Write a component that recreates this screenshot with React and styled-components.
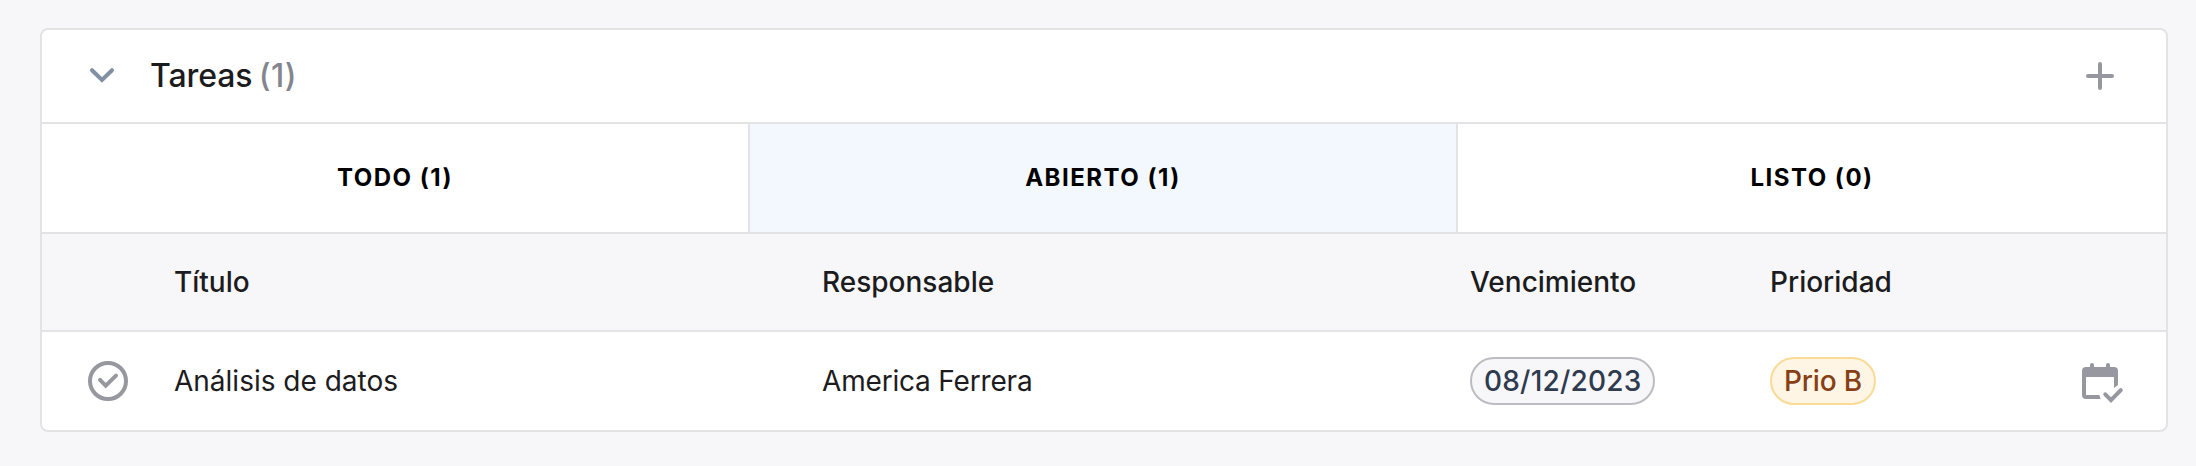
import styled, { createGlobalStyle } from "styled-components"

const GlobalStyle = createGlobalStyle`
  * {
    box-sizing: border-box;
  }

  body {
    margin: 0;
    background: #f7f7f9;
    color: #1c1c20;
    font-family: Inter, "Liberation Sans", sans-serif;
    -webkit-font-smoothing: antialiased;
  }
`

const Page = styled.main`
  min-height: 466px;
  padding: 28px 28px 34px 40px;
`

const Card = styled.section`
  border: 2px solid #e3e3e5;
  border-radius: 8px;
  background: #ffffff;
  overflow: hidden;
`

const CardHeader = styled.header`
  height: 94px;
  padding: 0 46px 0 44px;
  border-bottom: 2px solid #e3e3e5;
  display: flex;
  align-items: center;
`

const IconButton = styled.button`
  padding: 0;
  border: none;
  background: none;
  color: ${(props) => props.$color || "#97979f"};
  display: flex;
  cursor: pointer;
`

const Title = styled.h2`
  margin: 0 auto 0 32px;
  font-size: 32px;
  line-height: 40px;
  font-weight: 500;
  letter-spacing: -0.1px;
`

const Count = styled.span`
  margin-left: -2px;
  color: #85858e;
  letter-spacing: 0.3px;
`

const Tabs = styled.nav`
  height: 110px;
  border-bottom: 2px solid #e3e3e5;
  display: grid;
  grid-template-columns: repeat(3, 1fr);
`

const Tab = styled.button`
  padding: 0 0 2px;
  border: none;
  border-right: 2px solid #e3e3e5;
  background: ${(props) => (props.$active ? "#f3f7fe" : "#ffffff")};
  color: #000000;
  font-family: inherit;
  font-size: 24px;
  font-weight: 700;
  letter-spacing: 1.5px;
  text-transform: uppercase;
  cursor: pointer;

  &:last-child {
    border-right: none;
  }
`

const Row = styled.div`
  height: 98px;
  padding: 0 42px 0 46px;
  display: grid;
  grid-template-columns: 86px 648px 648px 300px 1fr 42px;
  align-items: center;
  font-size: 28px;
  line-height: 36px;
`

const HeadRow = styled(Row)`
  background: #f7f7f9;
  border-bottom: 2px solid #e3e3e5;
  font-weight: 500;
`

const Owner = styled.span`
  letter-spacing: -0.18px;
`

const Chip = styled.span`
  height: 48px;
  padding: 0 12px;
  border: 2px solid ${(props) => (props.$warning ? "#f9db95" : "#bcbcc2")};
  border-radius: 24px;
  background: ${(props) => (props.$warning ? "#fef5e5" : "#f7f7fa")};
  color: ${(props) => (props.$warning ? "#873f15" : "#2f3b4e")};
  font-weight: 500;
  letter-spacing: ${(props) => (props.$warning ? "-0.15px" : "0.2px")};
  display: inline-flex;
  align-items: center;
  vertical-align: middle;
`

const ChevronIcon = () => (
  <svg width="32" height="32" viewBox="0 0 32 32" fill="none" stroke="currentColor" strokeWidth="4" strokeLinecap="round">
    <path d="M6 10.2l10 9.8 10-9.8" />
  </svg>
)

const PlusIcon = () => (
  <svg width="40" height="40" viewBox="0 0 40 40" fill="none" stroke="currentColor" strokeWidth="4" strokeLinecap="round">
    <path d="M20 8v24M8 20h24" />
  </svg>
)

const CheckCircleIcon = () => (
  <svg width="40" height="40" viewBox="0 0 40 40" fill="none" stroke="currentColor" strokeWidth="4" strokeLinecap="round">
    <circle cx="20" cy="20" r="18" />
    <path d="M12 18.9l5.7 5.7L28 14.6" />
  </svg>
)

const CalendarCheckIcon = () => (
  <svg width="42" height="44" viewBox="0 -4 42 44" fill="none">
    <path
      fill="currentColor"
      d="M8 4V2a2 2 0 0 1 4 0v2h12V2a2 2 0 0 1 4 0v2h4a4 4 0 0 1 4 4v14l-4 3V14H4v18h13.3l1.4 4H4a4 4 0 0 1-4-4V8a4 4 0 0 1 4-4z"
    />
    <path d="M23.3 31.3l5.700 5.800 9.800-10" stroke="currentColor" strokeWidth="4" strokeLinecap="round" />
  </svg>
)

const tabs = [
  { label: "Todo", count: 1 },
  { label: "Abierto", count: 1, active: true },
  { label: "Listo", count: 0 },
]

const tasks = [
  { id: 1, title: "Análisis de datos", owner: "America Ferrera", due: "08/12/2023", priority: "Prio B" },
]

export default function App() {
  return (
    <Page>
      <GlobalStyle />
      <Card>
        <CardHeader>
          <IconButton $color="#8190a5" aria-label="Contraer">
            <ChevronIcon />
          </IconButton>
          <Title>
            Tareas <Count>({tasks.length})</Count>
          </Title>
          <IconButton aria-label="Añadir">
            <PlusIcon />
          </IconButton>
        </CardHeader>

        <Tabs>
          {tabs.map((tab) => (
            <Tab key={tab.label} $active={tab.active}>
              {tab.label} ({tab.count})
            </Tab>
          ))}
        </Tabs>

        <HeadRow>
          <span />
          <span>Título</span>
          <span>Responsable</span>
          <span>Vencimiento</span>
          <span>Prioridad</span>
        </HeadRow>

        {tasks.map((task) => (
          <Row key={task.id}>
            <IconButton aria-label="Completar">
              <CheckCircleIcon />
            </IconButton>
            <span>{task.title}</span>
            <Owner>{task.owner}</Owner>
            <div>
              <Chip>{task.due}</Chip>
            </div>
            <div>
              <Chip $warning>{task.priority}</Chip>
            </div>
            <IconButton aria-label="Planificar">
              <CalendarCheckIcon />
            </IconButton>
          </Row>
        ))}
      </Card>
    </Page>
  )
}
